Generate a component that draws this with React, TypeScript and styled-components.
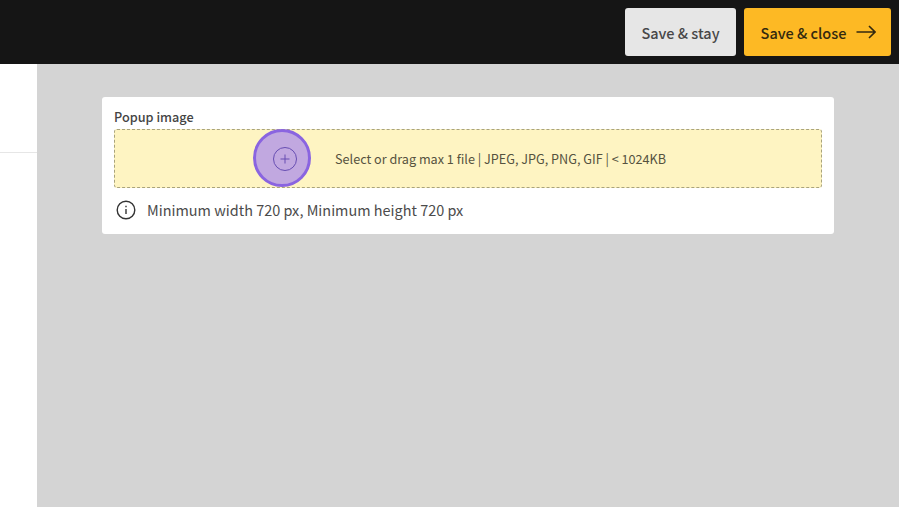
import React from 'react';
import styled, { createGlobalStyle } from 'styled-components';

const GlobalStyle = createGlobalStyle`
  html, body {
    margin: 0;
    height: 100%;
    overflow: hidden;
    background-color: #d4d4d4;
    font-family: "Noto Sans CJK SC", "Noto Sans", sans-serif;
  }
`;

const Page = styled.div`
  display: flex;
  flex-direction: column;
  width: 899px;
  height: 507px;
`;

const Header = styled.header`
  display: flex;
  justify-content: flex-end;
  align-items: flex-start;
  gap: 8px;
  height: 64px;
  box-sizing: border-box;
  padding: 8px 8px 0 0;
  background-color: #151515;
`;

const ActionButton = styled.button<{ $primary?: boolean }>`
  display: flex;
  align-items: center;
  justify-content: center;
  gap: 10px;
  height: 48px;
  width: ${(props) => (props.$primary ? '147px' : '111px')};
  padding: ${(props) => (props.$primary ? '0 0 0 2px' : '0')};
  box-sizing: border-box;
  border: none;
  border-radius: 3px;
  font-family: inherit;
  font-size: 14.5px;
  font-weight: 500;
  color: ${(props) => (props.$primary ? '#33290f' : '#484848')};
  background-color: ${(props) => (props.$primary ? '#fdb924' : '#e6e6e6')};
`;

const Body = styled.div`
  display: flex;
  flex: 1;
`;

const Sidebar = styled.aside`
  width: 37px;
  background-color: #ffffff;
`;

const SidebarRow = styled.div`
  height: 88px;
  border-bottom: 1px solid #e6e6e6;
`;

const Main = styled.main`
  flex: 1;
  padding: 33px 0 0 65px;
`;

const Card = styled.section`
  width: 732px;
  height: 137px;
  box-sizing: border-box;
  padding: 12px;
  border-radius: 3px;
  background-color: #ffffff;
`;

const FieldLabel = styled.div`
  height: 20px;
  font-size: 12.7px;
  line-height: 16px;
  font-weight: 500;
  color: #444444;
`;

const DropZone = styled.div`
  position: relative;
  display: flex;
  align-items: center;
  height: 59px;
  width: 708px;
  box-sizing: border-box;
  padding-left: 158px;
  border: 1px dashed #a9a37c;
  border-radius: 3px;
  background-color: #fef4c2;
  font-size: 12.65px;
  color: #55523f;
`;

const DropIcon = styled.span`
  display: flex;
  margin-right: 38px;
  color: #4a3f66;
`;

const Highlight = styled.div`
  position: absolute;
  left: 138px;
  top: -1px;
  width: 58px;
  height: 58px;
  box-sizing: border-box;
  border: 3px solid #8a64e0;
  border-radius: 50%;
  background-color: rgba(132, 92, 254, 0.5);
`;

const Hint = styled.div`
  display: flex;
  align-items: center;
  gap: 11px;
  margin-top: 11px;
  padding-left: 2px;
  font-size: 14.45px;
  line-height: 22px;
  color: #4b4b4b;
`;

function ArrowIcon() {
  return (
    <svg width="20" height="14" viewBox="0 0 20 14" fill="none" stroke="#33290f" strokeWidth="1.6">
      <path d="M0.5 7H19M13 1l6 6-6 6" />
    </svg>
  );
}

function PlusIcon() {
  return (
    <svg width="24" height="24" viewBox="0 0 24 24" fill="none" stroke="currentColor" strokeWidth="1">
      <circle cx="12" cy="12" r="11.5" />
      <path d="M12 7.5v9M7.5 12h9" />
    </svg>
  );
}

function InfoIcon() {
  return (
    <svg width="20" height="20" viewBox="0 0 20 20" fill="none" stroke="#333333" strokeWidth="1.4">
      <circle cx="10" cy="10" r="8.8" />
      <path d="M10 9v5" />
      <path d="M10 5.7v1.5" />
    </svg>
  );
}

export default function App() {
  return (
    <Page>
      <GlobalStyle />
      <Header>
        <ActionButton>Save &amp; stay</ActionButton>
        <ActionButton $primary>
          Save &amp; close
          <ArrowIcon />
        </ActionButton>
      </Header>
      <Body>
        <Sidebar>
          <SidebarRow />
        </Sidebar>
        <Main>
          <Card>
            <FieldLabel>Popup image</FieldLabel>
            <DropZone>
              <DropIcon>
                <PlusIcon />
              </DropIcon>
              Select or drag max 1 file | JPEG, JPG, PNG, GIF | &lt; 1024KB
              <Highlight />
            </DropZone>
            <Hint>
              <InfoIcon />
              Minimum width 720 px, Minimum height 720 px
            </Hint>
          </Card>
        </Main>
      </Body>
    </Page>
  );
}
